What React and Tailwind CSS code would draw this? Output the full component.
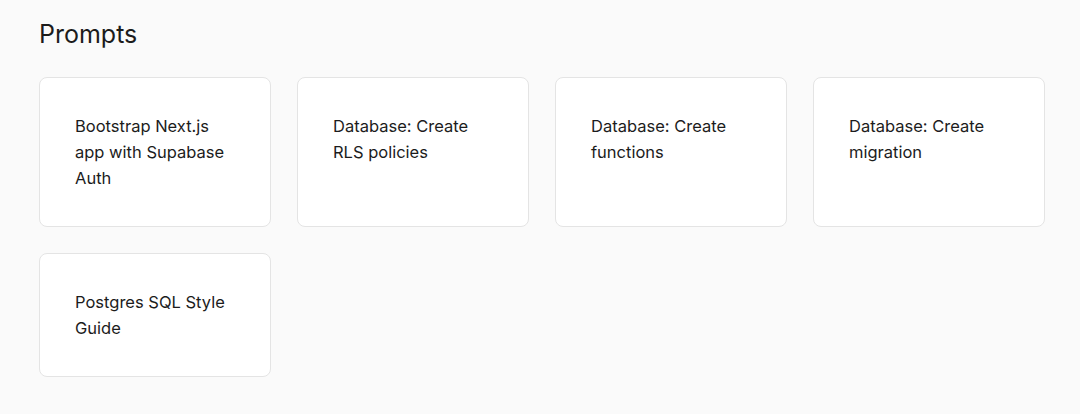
const prompts = [
  "Bootstrap Next.js app with Supabase Auth",
  "Database: Create RLS policies",
  "Database: Create functions",
  "Database: Create migration",
  "Postgres SQL Style Guide",
];

export default function App() {
  return (
    <div
      className="min-h-[414px] w-[1080px] bg-[#fafafa] pl-[39px] pr-[35px] pt-[18px] text-[#1c1c1c]"
      style={{ fontFamily: "Inter, 'Noto Sans', sans-serif" }}
    >
      {/* Header */}
      <h1 className="text-[25px] leading-[32px] font-normal mb-[27px]">Prompts</h1>

      {/* Prompt cards */}
      <div className="grid grid-cols-4 gap-[26px]">
        {prompts.map((p) => (
          <div
            key={p}
            className="rounded-lg border border-[#e4e4e4] bg-white p-[35px] text-[16.5px] leading-[26px] cursor-pointer hover:bg-[#f7f7f7] transition"
          >
            {p}
          </div>
        ))}
      </div>
    </div>
  );
}
